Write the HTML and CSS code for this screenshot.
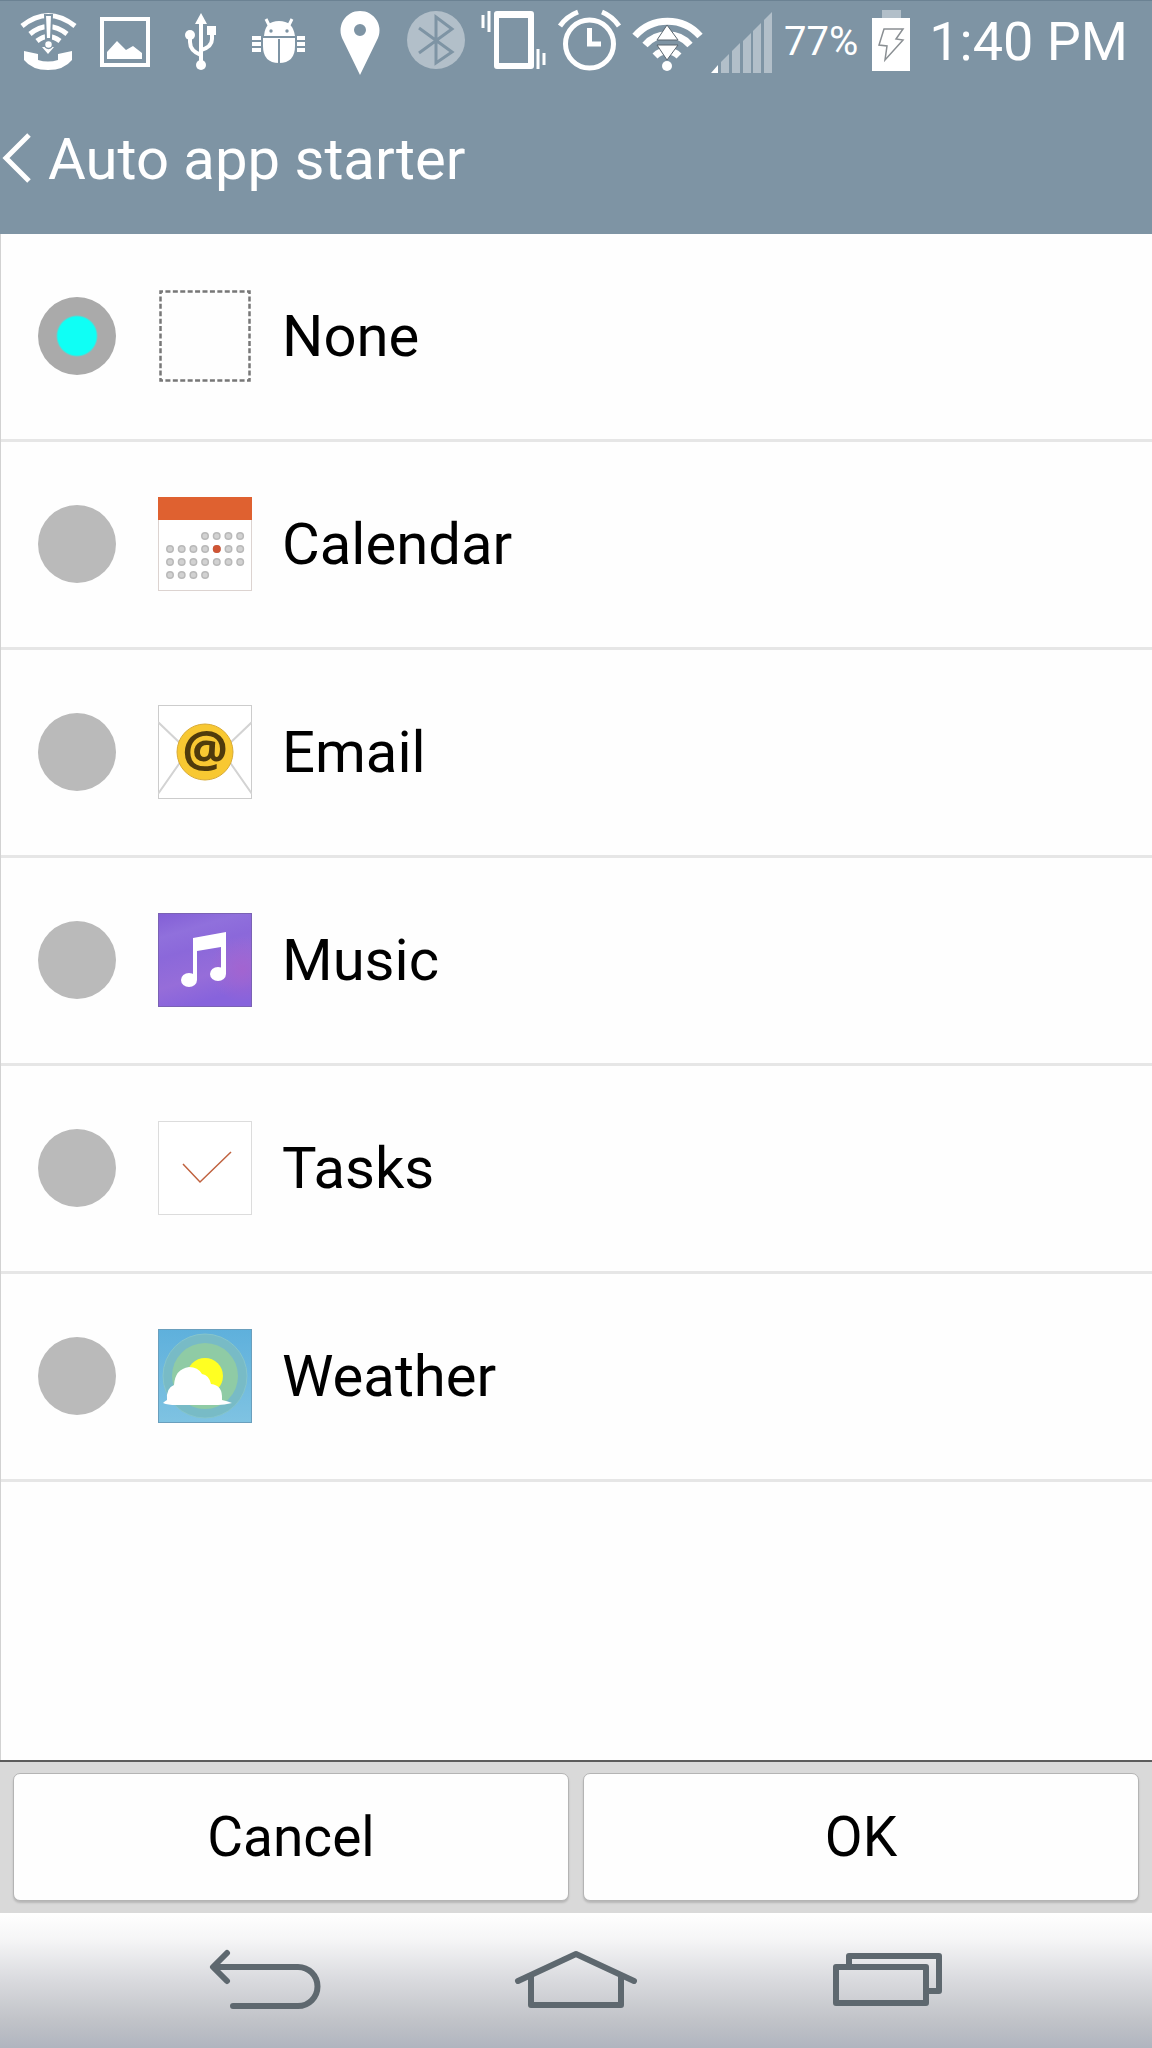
FILE: index.html
```
<!DOCTYPE html>
<html lang="en">
  <head>
    <meta charset="UTF-8" />
    <meta name="viewport" content="width=device-width, initial-scale=1.0" />
    <title>Auto app starter</title>
    <link rel="stylesheet" href="styles.css">
  </head>
  <body>
    <header class="header">
      <!-- Status bar -->
      <div class="status-bar">
        <svg class="status-icon" viewBox="10 0 77 80" aria-hidden="true">
          <g fill="none" stroke="#fff" stroke-width="5">
            <path d="M22 25Q48 4 75 25" />
            <path d="M30 33Q48 18 67 33" />
            <path d="M37 40Q48 31 60 40" />
          </g>
          <path d="M42 46l6 7 6-7z" fill="#fff" />
          <path d="M45 14h7l-1 24h-5z" fill="#fff" stroke="#7e94a4" stroke-width="2" />
          <circle cx="48.500" cy="43.500" r="4" fill="#fff" stroke="#7e94a4" stroke-width="1.500" />
          <path d="M24 50L38 53V59Q48 62 58 59V53L72 50V59Q64 69 48 69Q32 69 24 59z" fill="#fff" />
        </svg>
        <svg class="status-icon" viewBox="87 0 77 80" aria-hidden="true">
          <rect x="102" y="18" width="46" height="46" fill="none" stroke="#fff" stroke-width="4" />
          <path d="M107 58V51L117 40L126 49L133 45L142 52V58z" fill="#fff" />
        </svg>
        <svg class="status-icon" viewBox="164 0 77 80" aria-hidden="true">
          <path d="M201 20V62M190 34V41Q190 50 201 54M212 32V38Q212 46 201 49" fill="none" stroke="#fff" stroke-width="4" />
          <path d="M201 12l6 11h-12z" fill="#fff" />
          <circle cx="201" cy="64" r="5" fill="#fff" />
          <circle cx="190" cy="34" r="5" fill="#fff" />
          <rect x="207" y="25" width="9" height="9" fill="#fff" />
        </svg>
        <svg class="status-icon" viewBox="241 0 77 80" aria-hidden="true">
          <path d="M266 18l4 8M292 18l-4 8" stroke="#fff" stroke-width="3" />
          <path d="M264 35Q265 20 279 20Q293 20 295 35z" fill="#fff" />
          <path d="M263 37H295V45Q295 62 279 62Q263 62 263 45z" fill="#fff" />
          <path d="M279 38V62" stroke="#7e94a4" stroke-width="2" />
          <circle cx="271" cy="30" r="1.700" fill="#7e94a4" />
          <circle cx="287" cy="30" r="1.700" fill="#7e94a4" />
          <path d="M252 37h9M252 43h9M252 49h9M297 37h8M297 43h8M297 49h8" stroke="#fff" stroke-width="4" />
        </svg>
        <svg class="status-icon" viewBox="318 0 77 80" aria-hidden="true">
          <path fill-rule="evenodd" d="M360 74L343 39A19.500 19.500 0 1 1 377 39zM360 23a6 6 0 1 0 0 12a6 6 0 1 0 0-12z" fill="#fff" />
        </svg>
        <svg class="status-icon" viewBox="395 0 77 80" aria-hidden="true">
          <circle cx="436" cy="39" r="29" fill="#b2bfc9" />
          <path d="M419 27L452 51L436 62V16L452 28L419 52" fill="none" stroke="#7e94a4" stroke-width="3" />
        </svg>
        <svg class="status-icon" viewBox="472 0 77 80" aria-hidden="true">
          <path fill-rule="evenodd" d="M497 10h34q3 0 3 3v52q0 3-3 3h-34q-3 0-3-3v-52q0-3 3-3zM499 17v45h29v-45z" fill="#fff" />
          <path d="M483 14v13M489 10v21M538 48v20M544 52v12" stroke="#fff" stroke-width="3" />
        </svg>
        <svg class="status-icon" viewBox="549 0 77 80" aria-hidden="true">
          <circle cx="589.500" cy="43" r="24" fill="none" stroke="#fff" stroke-width="5" />
          <path d="M589.500 27V43H601" fill="none" stroke="#fff" stroke-width="5" />
          <path d="M560 25Q567 15 578 11M602 11Q612 15 619 25" fill="none" stroke="#fff" stroke-width="5" />
        </svg>
        <svg class="status-icon" viewBox="626 0 77 80" aria-hidden="true">
          <g fill="none" stroke="#fff" stroke-width="7">
            <path d="M635 35A43 43 0 0 1 700 35" />
            <path d="M645 44A30 30 0 0 1 690 44" />
            <path d="M655 55A17 17 0 0 1 679 55" />
          </g>
          <circle cx="667" cy="65" r="5" fill="#fff" />
          <path d="M657 39h21l-11-15zM657 44h21l-11 15z" fill="#fff" stroke="#59656e" stroke-width="1" />
          <path d="M656 41.500h23" stroke="#7e94a4" stroke-width="3" />
        </svg>
        <svg class="status-icon" viewBox="703 0 77 80" aria-hidden="true">
          <path d="M711 72l7-8v8z" fill="#fff" />
          <path d="M721 72V61l8-8v19zM732 72V50l8-8v30zM743 72V40l8-8v40zM753 72V30l8-8v50zM764 72V19l8-8v61z" fill="#b2bfc9" />
        </svg>
        <span class="battery-level">77%</span>
        <svg class="battery-icon" viewBox="0 0 38 80" aria-hidden="true">
          <rect x="10" y="9" width="19" height="8" fill="#b2bfc9" />
          <rect x="0" y="17" width="38" height="53" fill="#fff" />
          <path d="M12 28H31L24 38L31 39L13 59L15 45L7 44z" fill="none" stroke="#8a8f93" stroke-width="1.500" />
        </svg>
        <span class="clock">1:40 PM</span>
      </div>

      <!-- Title bar -->
      <div class="title-bar">
        <button class="back" type="button" aria-label="Back">
          <svg width="32" height="52" viewBox="0 0 32 52" aria-hidden="true">
            <path d="M29 2L6 25L29 48" fill="none" stroke="#fff" stroke-width="5" />
          </svg>
        </button>
        <h1>Auto app starter</h1>
      </div>
    </header>

    <!-- App list -->
    <main class="app-list">
      <label class="app-row">
        <input type="radio" name="app" value="none" checked />
        <svg class="app-icon" viewBox="0 0 94 94" aria-hidden="true">
          <rect x="2.500" y="2.500" width="89" height="89" fill="none" stroke="#777" stroke-width="2.500" stroke-dasharray="5 2.417" stroke-dashoffset="2.500" />
        </svg>
        <span>None</span>
      </label>
      <label class="app-row">
        <input type="radio" name="app" value="calendar" />
        <svg class="app-icon" viewBox="0 0 94 94" aria-hidden="true">
          <rect x="0.500" y="0.500" width="93" height="93" fill="#fff" stroke="#dcd3d0" />
          <rect width="94" height="23" fill="#df6130" />
          <g fill="none" stroke="#b9b9b9" stroke-width="8" stroke-linecap="round" stroke-dasharray="0 11.700">
            <path d="M47 39H83M12 52H83M12 65H83M12 78H48" />
          </g>
          <g fill="none" stroke="#d2d2d2" stroke-width="5" stroke-linecap="round" stroke-dasharray="0 11.700">
            <path d="M47 39H83M12 52H83M12 65H83M12 78H48" />
          </g>
          <circle cx="58.800" cy="52" r="4" fill="#cf5535" />
        </svg>
        <span>Calendar</span>
      </label>
      <label class="app-row">
        <input type="radio" name="app" value="email" />
        <svg class="app-icon" viewBox="0 0 94 94" aria-hidden="true">
          <rect x="0.500" y="0.500" width="93" height="93" fill="#fff" stroke="#ccc" />
          <path d="M0 17L47 62L94 17M0 89L30 46M94 89L64 46" fill="none" stroke="#d3d3d3" stroke-width="2" />
          <circle cx="47" cy="47" r="28" fill="#f8c832" stroke="#d9ab35" />
          <text class="at-sign" x="47" y="62" text-anchor="middle">@</text>
        </svg>
        <span>Email</span>
      </label>
      <label class="app-row">
        <input type="radio" name="app" value="music" />
        <svg class="app-icon" viewBox="0 0 94 94" aria-hidden="true">
          <defs>
            <linearGradient id="music-bg" x1="0" y1="0" x2="0.300" y2="1">
              <stop offset="0" stop-color="#825ed6" />
              <stop offset="0.250" stop-color="#9070dc" />
              <stop offset="0.450" stop-color="#8b68da" />
              <stop offset="0.750" stop-color="#966dd9" />
              <stop offset="1" stop-color="#8763dc" />
            </linearGradient>
            <radialGradient id="music-glow" cx="0.900" cy="0.600" r="0.350">
              <stop offset="0" stop-color="#a264d0" />
              <stop offset="1" stop-color="#a264d0" stop-opacity="0" />
            </radialGradient>
          </defs>
          <rect width="94" height="94" fill="url(#music-bg)" />
          <rect width="94" height="94" fill="url(#music-glow)" />
          <rect x="0.500" y="0.500" width="93" height="93" fill="none" stroke="#7a62b4" />
          <path d="M35 25L68 19V61H63V34L39 38V67H35z" fill="#fff" />
          <ellipse cx="31" cy="67" rx="8" ry="7" fill="#fff" />
          <ellipse cx="60" cy="61" rx="8" ry="7" fill="#fff" />
        </svg>
        <span>Music</span>
      </label>
      <label class="app-row">
        <input type="radio" name="app" value="tasks" />
        <svg class="app-icon" viewBox="0 0 94 94" aria-hidden="true">
          <rect x="0.500" y="0.500" width="93" height="93" fill="#fff" stroke="#dcdcdc" />
          <path d="M25 43L42 61L73 31" fill="none" stroke="#c0623f" stroke-width="1.500" />
        </svg>
        <span>Tasks</span>
      </label>
      <label class="app-row">
        <input type="radio" name="app" value="weather" />
        <svg class="app-icon" viewBox="0 0 94 94" aria-hidden="true">
          <defs>
            <linearGradient id="sky" x1="0" y1="0" x2="0" y2="1">
              <stop offset="0" stop-color="#5eb0dc" />
              <stop offset="1" stop-color="#7fc3e2" />
            </linearGradient>
          </defs>
          <rect width="94" height="94" fill="url(#sky)" />
          <rect x="0.500" y="0.500" width="93" height="93" fill="none" stroke="#6a9fbd" />
          <circle cx="47" cy="47" r="42" fill="#78bbc6" stroke="#86c5cb" />
          <circle cx="47" cy="47" r="33" fill="#8fcba5" />
          <circle cx="47" cy="47" r="18" fill="#ff2" />
          <path d="M5 74Q7 72 9 71Q8 59 16 56Q17 40 31 38Q40 38 44 45Q51 46 53 55Q65 56 64 71Q69 72 74 74Q66 76 60 76H18Q10 76 5 74z" fill="#fff" />
        </svg>
        <span>Weather</span>
      </label>
    </main>

    <!-- Action buttons -->
    <div class="actions">
      <button type="button">Cancel</button>
      <button type="button">OK</button>
    </div>

    <!-- System navigation -->
    <nav class="nav-bar">
      <button type="button" aria-label="Back">
        <svg viewBox="0 0 124 64" aria-hidden="true">
          <path d="M24 6L10 20L24 34M12 20H95A19 19 0 0 1 95 59H30" />
        </svg>
      </button>
      <button type="button" aria-label="Home">
        <svg viewBox="0 0 124 64" aria-hidden="true">
          <path d="M4 34L62 7L120 34M17 30V58H107V30" />
        </svg>
      </button>
      <button type="button" aria-label="Recent apps">
        <svg viewBox="0 0 124 64" aria-hidden="true">
          <path d="M11 20H101V56H11zM24 20V9H114V44H101" />
        </svg>
      </button>
    </nav>
  </body>
</html>
```
FILE: styles.css
```
* {
  box-sizing: border-box;
}
body {
  font-family: Roboto, "Liberation Sans", sans-serif;
  background-color: #fefefe;
  color: #000;
  margin: 0;
  min-height: 100vh;
  display: flex;
  flex-direction: column;
}
button {
  font-family: inherit;
  color: inherit;
  border: none;
  padding: 0;
  cursor: pointer;
}
.header {
  height: 234px;
  background-color: #7e94a4;
  border-top: 1px solid #6b8293;
  color: #fff;
}
.status-bar {
  display: flex;
  align-items: center;
  height: 80px;
  padding: 0 24px 0 10px;
}
.status-icon {
  flex: none;
  width: 77px;
  height: 80px;
}
.battery-level {
  margin-left: 4px;
  font-size: 40px;
}
.battery-icon {
  flex: none;
  width: 38px;
  height: 80px;
  margin-left: 14px;
}
.clock {
  margin-left: auto;
  font-size: 54px;
  white-space: nowrap;
}
.title-bar {
  display: flex;
  align-items: center;
  gap: 16px;
  height: 160px;
  padding-bottom: 4px;
}
.title-bar h1 {
  margin: 0;
  font-size: 58px;
  font-weight: 400;
}
.back {
  display: flex;
  background: none;
}
/* App list */
.app-list {
  flex: 1;
  border-left: 1px solid #d2d2d2;
}
.app-row {
  display: flex;
  align-items: center;
  height: 208px;
  padding: 0 0 2px 37px;
  border-bottom: 3px solid #e6e6e6;
  font-size: 58px;
  cursor: pointer;
}
.app-row input {
  appearance: none;
  flex: none;
  width: 78px;
  height: 78px;
  margin: 0;
  border-radius: 50%;
  background: #bababa;
}
.app-row input:checked {
  background: radial-gradient(circle, #0ffff5 19px, #aaa 21px);
}
.app-icon {
  flex: none;
  width: 94px;
  height: 94px;
  margin: 0 30px 0 42px;
}
.at-sign {
  font-family: "Open Sans", sans-serif;
  font-size: 51px;
  font-weight: 700;
  fill: #4f3b0c;
}
/* Cancel and OK */
.actions {
  display: flex;
  gap: 14px;
  height: 153px;
  padding: 11px 13px;
  background: #d9d9d9;
  border-top: 2px solid #5c5c5c;
}
.actions button {
  flex: 1;
  height: 128px;
  border: 1px solid #b4b4b4;
  border-radius: 7px;
  background: #fefefe;
  box-shadow: 0 2px 2px #b8b8b8;
  font-size: 55px;
}
/* Bottom navigation */
.nav-bar {
  display: flex;
  height: 135px;
  padding: 0 109px;
  background: linear-gradient(#fff, #f5f5f6 20%, #d9dade 50%, #c2c4c9 78%, #b0b5bf);
}
.nav-bar button {
  flex: 1;
  background: none;
}
.nav-bar svg {
  width: 124px;
  height: 64px;
  fill: none;
  stroke: #5e686f;
  stroke-width: 6;
  stroke-linecap: round;
  stroke-linejoin: round;
}
```
